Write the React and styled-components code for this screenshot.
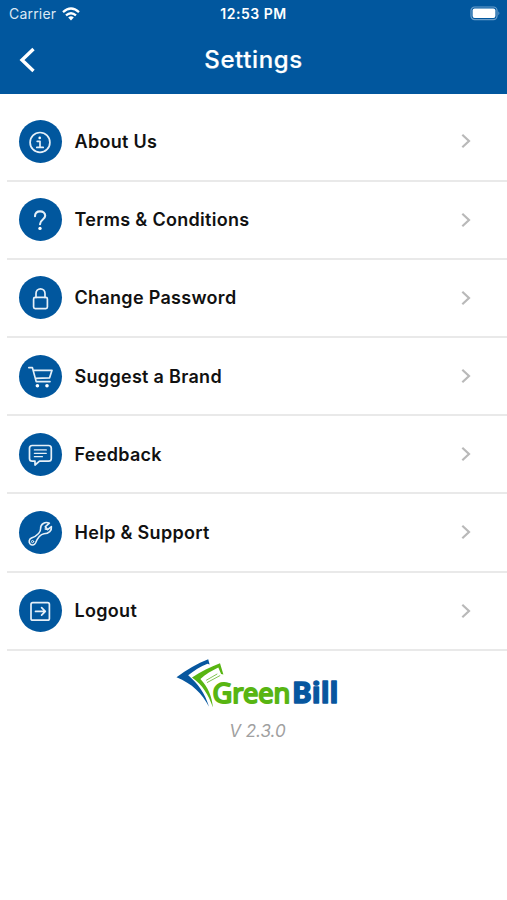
import React from "react";
import styled, { createGlobalStyle } from "styled-components";

const menuItems = [
  { label: "About Us", icon: "info" },
  { label: "Terms & Conditions", icon: "question" },
  { label: "Change Password", icon: "lock" },
  { label: "Suggest a Brand", icon: "cart" },
  { label: "Feedback", icon: "feedback" },
  { label: "Help & Support", icon: "wrench" },
  { label: "Logout", icon: "logout" },
];

const icons = {
  info: (
    <>
      <circle cx="21" cy="22.4" r="9.9" />
      <path d="M18.2 21.3H21V27.4M17.8 27.4H24.2" />
      <circle cx="20.7" cy="17.9" r="1.3" fill="#fff" stroke="none" />
    </>
  ),
  question: (
    <>
      <path
        strokeWidth="2.1"
        d="M16 18.2C16 15 18 13.4 21 13.4S26.2 15.2 26.2 17.8C26.2 21.6 21 21.5 21 26.2"
      />
      <circle cx="21" cy="30.4" r="1.7" fill="#fff" stroke="none" />
    </>
  ),
  lock: (
    <>
      <rect x="14.6" y="21.4" width="13.8" height="11.2" rx="1.6" />
      <path d="M17 21.4V17.5A4.5 4.7 0 0 1 26 17.5V21.4" />
    </>
  ),
  cart: (
    <>
      <path d="M9.8 12.6H13.4L17.2 26.6H31M14.3 15.3H33L30.6 22.8L16.3 23.4" />
      <circle cx="18.4" cy="30.7" r="1.8" fill="#fff" stroke="none" />
      <circle cx="28" cy="30.7" r="1.8" fill="#fff" stroke="none" />
    </>
  ),
  feedback: (
    <>
      <path d="M13.2 12.5H29.6Q32.3 12.5 32.3 15.2V25.4Q32.3 28.1 29.6 28.1H20.5L16 32V28.1H13.2Q10.5 28.1 10.5 25.4V15.2Q10.5 12.5 13.2 12.5Z" />
      <path strokeWidth="1.3" d="M15.4 16.9H27.3M15.4 20.3H27.3M15.4 23.7H23.4" />
    </>
  ),
  wrench: (
    <>
      <path
        strokeWidth="1.6"
        d="M30.4 12.2C26 10.3 21.4 13 21.6 17.6C21.8 21.8 18 24.8 12.4 27.1C10 28.2 9.6 31 11 32.8C12.7 34.8 15.4 34.3 16.5 32C18.4 27.5 20.8 23.5 25 22.8C29.8 22.6 33 19.5 32.4 15.6L28.6 18.6L26.4 15.6Z"
      />
      <path strokeWidth="1.1" d="M26.4 15.6L26.2 18.2L28.6 18.6" />
      <circle cx="13.6" cy="30.6" r="1.1" strokeWidth="1" />
    </>
  ),
  logout: (
    <>
      <rect x="12" y="13.6" width="18.4" height="17.6" rx="1.8" />
      <path d="M16.5 22.4H26M22.6 18.7L26.3 22.4L22.6 26.1" />
    </>
  ),
};

const Logo = () => (
  <LogoSvg viewBox="0 0 169 60">
    <path
      fill="#07579f"
      d="M1.5 20.2C12 12.4 22 6.5 33.2 2.2L34.6 7.6L32.5 6.7C25.5 9.6 18.8 13.5 13.2 18.3C22.8 26.5 30 36.5 34 49.8C27.3 36.6 17 26.4 1.5 20.2Z"
    />
    <path
      fill="#58b512"
      d="M17 20.4C26 14.5 35.3 10 45 6.2L48.4 17.5L46.1 17L43.3 10.6C36.9 13.6 30.8 17.3 25.4 22C33.3 30.3 36.7 39.4 38 50.6C33.2 37.1 27.7 28 17 20.4Z"
    />
    <path
      fill="none"
      stroke="#82c451"
      strokeWidth="1"
      d="M31.2 23.3L42.3 16.9M32 25.6L45.2 18.5"
    />
    <LogoText
      x="37.4"
      y="45.8"
      fill="#58b512"
      stroke="#58b512"
      textLength="78"
      lengthAdjust="spacingAndGlyphs"
    >
      Green
    </LogoText>
    <LogoText
      x="117"
      y="46.4"
      fill="#07579f"
      stroke="#07579f"
      $bold
      textLength="46.5"
      lengthAdjust="spacingAndGlyphs"
    >
      Bill
    </LogoText>
  </LogoSvg>
);

export default function App() {
  return (
    <Screen>
      <GlobalStyle />
      <Header>
        <StatusBar>
          <Carrier>
            Carrier
            <svg width="18" height="14" viewBox="0 0 18 14">
              <g fill="none" stroke="#fff" strokeWidth="2.3">
                <path d="M1 5.1Q9 -2 17 5.1" />
                <path d="M4 8.4Q9 4 14 8.4" />
              </g>
              <path fill="#fff" d="M6.2 10.4Q9 8.2 11.8 10.4L9 13.4Z" />
            </svg>
          </Carrier>
          <Time>12:53 PM</Time>
          <Battery>
            <svg width="31" height="15" viewBox="0 0 31 15">
              <rect
                x="1"
                y="1"
                width="26"
                height="12.6"
                rx="3.6"
                fill="none"
                stroke="#6c9fcb"
                strokeWidth="1.2"
              />
              <rect x="2.6" y="2.6" width="22.8" height="9.4" rx="2" fill="#fff" />
              <path d="M28.4 5.3Q30.4 7.3 28.4 9.3Z" fill="#6c9fcb" />
            </svg>
          </Battery>
        </StatusBar>
        <TitleBar>
          <BackButton aria-label="Back">
            <svg width="16" height="26" viewBox="0 0 16 26">
              <path
                d="M14.5 2L3 13L14.5 24"
                fill="none"
                stroke="#fff"
                strokeWidth="3.4"
              />
            </svg>
          </BackButton>
          <Title>Settings</Title>
        </TitleBar>
      </Header>
      <Menu>
        {menuItems.map((item) => (
          <MenuItem key={item.label}>
            <IconCircle>
              <svg viewBox="0 0 43 43">{icons[item.icon]}</svg>
            </IconCircle>
            <Label>{item.label}</Label>
            <Chevron viewBox="0 0 10 16">
              <path d="M1.3 1.7L8 8L1.3 14.3" />
            </Chevron>
          </MenuItem>
        ))}
      </Menu>
      <Footer>
        <Logo />
        <Version>V 2.3.0</Version>
      </Footer>
    </Screen>
  );
}

const GlobalStyle = createGlobalStyle`
  body {
    margin: 0;
    background-color: #fff;
    font-family: Inter, "Liberation Sans", sans-serif;
  }
`;

const Screen = styled.div`
  width: 100%;
  height: 900px;
  overflow: hidden;
  background-color: #fff;
`;

const Header = styled.header`
  height: 93.6px;
  background-color: #01579e;
  color: #fff;
`;

const StatusBar = styled.div`
  display: grid;
  grid-template-columns: 1fr auto 1fr;
  align-items: center;
  height: 27px;
  padding: 0 6px 0 9px;
`;

const Carrier = styled.div`
  display: flex;
  align-items: center;
  gap: 6px;
  font-size: 14px;
  letter-spacing: 0.2px;
  color: #dbe8f4;
`;

const Time = styled.div`
  margin-right: 3px;
  font-size: 14px;
  font-weight: 600;
  letter-spacing: 0.5px;
`;

const Battery = styled.div`
  display: flex;
  justify-content: flex-end;
`;

const TitleBar = styled.div`
  display: grid;
  grid-template-columns: 60px 1fr 60px;
  align-items: center;
  height: 65px;
`;

const BackButton = styled.button`
  display: flex;
  padding: 0 0 0 19px;
  border: none;
  background-color: transparent;
`;

const Title = styled.h1`
  margin: 0;
  text-align: center;
  font-size: 24px;
  font-weight: 500;
  letter-spacing: 0.6px;
  -webkit-text-stroke: 0.2px #fff;
`;

const Menu = styled.ul`
  margin: 0;
  padding: 9.8px 0 0 7px;
  list-style: none;
`;

const MenuItem = styled.li`
  display: flex;
  align-items: center;
  box-sizing: border-box;
  height: 78.2px;
  padding: 0 36.5px 0 12px;
  border-bottom: 2px solid #e9e9e9;
`;

const IconCircle = styled.div`
  width: 43px;
  height: 43px;
  border-radius: 50%;
  background-color: #01579e;

  svg {
    display: block;
    fill: none;
    stroke: #e6f0f8;
    stroke-width: 1.7;
    stroke-linecap: round;
    stroke-linejoin: round;
  }
`;

const Label = styled.span`
  flex: 1;
  margin-left: 12.5px;
  font-size: 18px;
  font-weight: 600;
  letter-spacing: 0.3px;
  color: #111;
`;

const Chevron = styled.svg`
  width: 10px;
  height: 16px;
  fill: none;
  stroke: #b9b9b9;
  stroke-width: 2.2;
`;

const Footer = styled.footer`
  display: flex;
  flex-direction: column;
  align-items: center;
  padding-top: 6px;
  padding-left: 8px;
`;

const LogoSvg = styled.svg`
  width: 169px;
  height: 60px;
  margin-left: 4px;
`;

const LogoText = styled.text`
  font-family: "Noto Sans", sans-serif;
  font-size: ${(props) => (props.$bold ? "29px" : "27px")};
  font-weight: ${(props) => (props.$bold ? 700 : 400)};
  stroke-width: ${(props) => (props.$bold ? 1.3 : 1.9)};
  stroke-linejoin: round;
`;

const Version = styled.p`
  margin: 3px 0 0;
  font-size: 17px;
  font-style: italic;
  line-height: 22px;
  color: #a0a0a0;
`;
